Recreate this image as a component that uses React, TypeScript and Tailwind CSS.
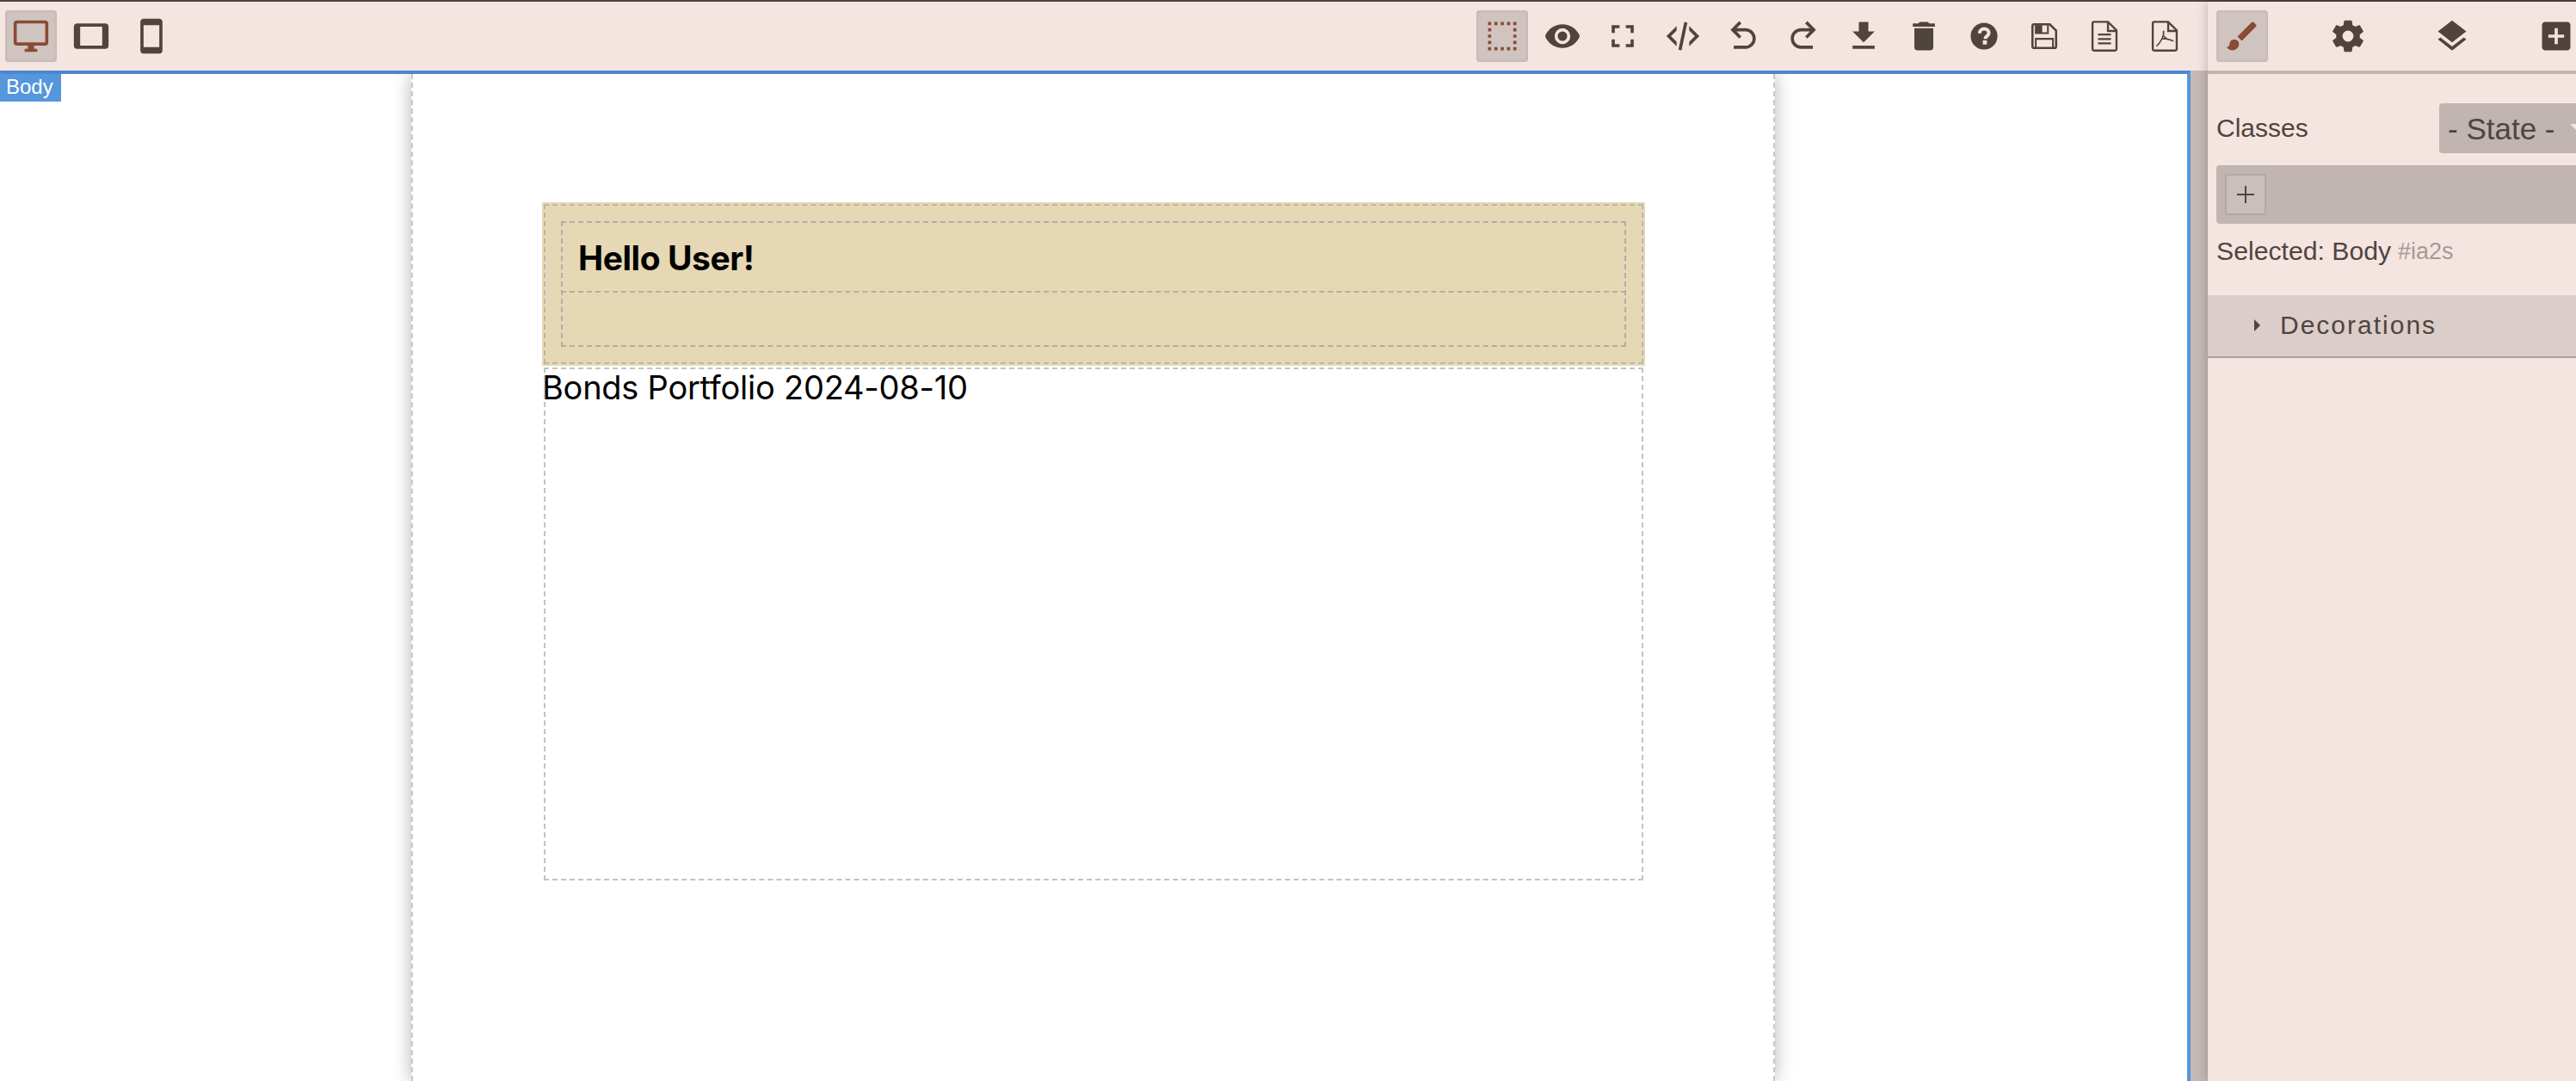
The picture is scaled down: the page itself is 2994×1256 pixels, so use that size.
import React from 'react';

const ICON = '#50443f';
const ACTIVE = '#8a4b34';

const paths = {
  desktop: 'M21,16H3V4H21M21,2H3C1.89,2 1,2.89 1,4V16A2,2 0 0,0 3,18H10V20H8V22H16V20H14V18H21A2,2 0 0,0 23,16V4C23,2.89 22.1,2 21,2Z',
  tablet: 'M19,18H5V6H19M21,4H3C1.89,4 1,4.89 1,6V18A2,2 0 0,0 3,20H21A2,2 0 0,0 23,18V6C23,4.89 22.1,4 21,4Z',
  mobile: 'M17,19H7V5H17M17,1H7C5.89,1 5,1.89 5,3V21A2,2 0 0,0 7,23H17A2,2 0 0,0 19,21V3C19,1.89 18.1,1 17,1Z',
  outline: 'M15,5H17V3H15M15,21H17V19H15M11,5H13V3H11M19,5H21V3H19M19,9H21V7H19M19,21H21V19H19M19,13H21V11H19M19,17H21V15H19M3,5H5V3H3M3,9H5V7H3M3,13H5V11H3M3,17H5V15H3M3,21H5V19H3M11,21H13V19H11M7,21H9V19H7M7,5H9V3H7V5Z',
  eye: 'M12,9A3,3 0 0,0 9,12A3,3 0 0,0 12,15A3,3 0 0,0 15,12A3,3 0 0,0 12,9M12,17A5,5 0 0,1 7,12A5,5 0 0,1 12,7A5,5 0 0,1 17,12A5,5 0 0,1 12,17M12,4.5C7,4.5 2.73,7.61 1,12C2.73,16.39 7,19.5 12,19.5C17,19.5 21.27,16.39 23,12C21.27,7.61 17,4.5 12,4.5Z',
  fullscreen: 'M5,5H10V7H7V10H5V5M14,5H19V10H17V7H14V5M17,14H19V19H14V17H17V14M10,17V19H5V14H7V17H10Z',
  code: 'M12.89,3L14.85,3.4L11.11,21L9.15,20.6L12.89,3M19.59,12L16,8.41V5.58L22.42,12L16,18.41V15.58L19.59,12M1.58,12L8,5.58V8.41L4.41,12L8,15.58V18.41L1.58,12Z',
  undo: 'M20 13.5C20 17.09 17.09 20 13.5 20H6V18H13.5C16 18 18 16 18 13.5S16 9 13.5 9H7.83L10.91 12.09L9.5 13.5L4 8L9.5 2.5L10.92 3.91L7.83 7H13.5C17.09 7 20 9.91 20 13.5Z',
  redo: 'M10.5 18H18V20H10.5C6.91 20 4 17.09 4 13.5S6.91 7 10.5 7H16.17L13.08 3.91L14.5 2.5L20 8L14.5 13.5L13.09 12.09L16.17 9H10.5C8 9 6 11 6 13.5S8 18 10.5 18Z',
  download: 'M5,20H19V18H5M19,9H15V3H9V9H5L12,16L19,9Z',
  trash: 'M19,4H15.5L14.5,3H9.5L8.5,4H5V6H19M6,19A2,2 0 0,0 8,21H16A2,2 0 0,0 18,19V7H6V19Z',
  brush: 'M20.71,4.63L19.37,3.29C19,2.9 18.35,2.9 17.96,3.29L9,12.25L11.75,15L20.71,6.04C21.1,5.65 21.1,5 20.71,4.63M7,14A3,3 0 0,0 4,17C4,18.31 2.84,19 2,19C2.92,20.22 4.5,21 6,21A4,4 0 0,0 10,17A3,3 0 0,0 7,14Z',
  cog: 'M12,15.5A3.5,3.5 0 0,1 8.5,12A3.5,3.5 0 0,1 12,8.5A3.5,3.5 0 0,1 15.5,12A3.5,3.5 0 0,1 12,15.5M19.43,12.97C19.47,12.65 19.5,12.33 19.5,12C19.5,11.67 19.47,11.34 19.43,11L21.54,9.37C21.73,9.22 21.78,8.95 21.66,8.73L19.66,5.27C19.54,5.05 19.27,4.96 19.05,5.05L16.56,6.05C16.04,5.66 15.5,5.32 14.87,5.07L14.5,2.42C14.46,2.18 14.25,2 14,2H10C9.75,2 9.54,2.18 9.5,2.42L9.13,5.07C8.5,5.32 7.96,5.66 7.44,6.05L4.95,5.05C4.73,4.96 4.46,5.05 4.34,5.27L2.34,8.73C2.21,8.95 2.27,9.22 2.46,9.37L4.57,11C4.53,11.34 4.5,11.67 4.5,12C4.5,12.33 4.53,12.65 4.57,12.97L2.46,14.63C2.27,14.78 2.21,15.05 2.34,15.27L4.34,18.73C4.46,18.95 4.73,19.03 4.95,18.95L7.44,17.94C7.96,18.34 8.5,18.68 9.13,18.93L9.5,21.58C9.54,21.82 9.75,22 10,22H14C14.25,22 14.46,21.82 14.5,21.58L14.87,18.93C15.5,18.67 16.04,18.34 16.56,17.94L19.05,18.95C19.27,19.03 19.54,18.95 19.66,18.73L21.66,15.27C21.78,15.05 21.73,14.78 21.54,14.63L19.43,12.97Z',
  layers: 'M12,16L19.36,10.27L21,9L12,2L3,9L4.63,10.27M12,18.54L4.62,12.81L3,14.07L12,21.07L21,14.07L19.37,12.8L12,18.54Z',
  plusBox: 'M17,13H13V17H11V13H7V11H11V7H13V11H17M19,3H5C3.89,3 3,3.89 3,5V19C3,20.1 3.89,21 5,21H19C20.1,21 21,20.1 21,19V5C21,3.89 20.1,3 19,3Z',
};

type IconName = keyof typeof paths | 'help' | 'save' | 'file' | 'pdf';

const pageOutline = 'M6.2 2.9H14.2L19.6 8.3V20.1C19.6 20.7 19.2 21.1 18.6 21.1H5.4C4.8 21.1 4.4 20.7 4.4 20.1V3.9C4.4 3.3 4.8 2.9 5.4 2.9Z M14.2 3V8.7H19.6';

// these four are drawn by hand, the rest are filled paths
const customIcons: Partial<Record<IconName, React.ReactNode>> = {
  help: (
    <>
      <circle cx="12" cy="12" r="8.5" />
      <path
        d="M9.2 10.2C9.2 8.5 10.5 7.4 12.1 7.4C13.8 7.4 15 8.5 15 10C15 11.2 14.2 11.8 13.5 12.3C12.9 12.7 12.8 13 12.8 13.8"
        fill="none"
        stroke="#f4e5e1"
        strokeWidth="2.2"
      />
      <rect x="11.2" y="14.7" width="2.6" height="2.6" fill="#f4e5e1" />
    </>
  ),
  save: (
    <>
      <path
        d="M5.5 4.5H15.5L19.5 8.5V18.5C19.5 19.1 19.1 19.5 18.5 19.5H5.5C4.9 19.5 4.5 19.1 4.5 18.5V5.5C4.5 4.9 4.9 4.5 5.5 4.5Z"
        fill="none"
        stroke="currentColor"
        strokeWidth="1.4"
      />
      <path d="M6.6 5V10.1H14.3V5M6.6 19.5V13.7H17.5V19.5" fill="none" stroke="currentColor" strokeWidth="1.1" />
      <rect x="7.1" y="5" width="3.6" height="5" />
    </>
  ),
  file: (
    <>
      <path d={pageOutline} fill="none" stroke="currentColor" strokeWidth="1.3" />
      <path d="M7.9 11H16.1M7.9 13.8H16.1M7.9 16.6H16.1" fill="none" stroke="currentColor" strokeWidth="1.2" />
    </>
  ),
  pdf: (
    <>
      <path d={pageOutline} fill="none" stroke="currentColor" strokeWidth="1.3" />
      <path
        d="M11.2 8.6C11.8 11.5 9.8 15.5 6.8 18.4M10 13.8C12 13.2 14.8 14 17.5 15.2M11.5 11.8C11.8 12.8 12.5 13.2 13.4 13.7"
        fill="none"
        stroke="currentColor"
        strokeWidth="0.9"
      />
    </>
  ),
};

const ToolButton = ({ name, active }: { name: IconName; active?: boolean }) => (
  <div
    className={`flex h-[60px] w-[60px] shrink-0 items-center justify-center rounded-[4px] ${
      active ? 'bg-[#d0c4c0] shadow-[inset_0_0_4px_rgba(0,0,0,0.12)]' : ''
    }`}
  >
    <svg viewBox="0 0 24 24" className="h-11 w-11" fill={active ? ACTIVE : ICON} color={active ? ACTIVE : ICON}>
      {customIcons[name] ?? <path d={paths[name as keyof typeof paths]} />}
    </svg>
  </div>
);

const rightTools: IconName[] = ['eye', 'fullscreen', 'code', 'undo', 'redo', 'download', 'trash', 'help', 'save', 'file', 'pdf'];

const blockOutline = 'outline-2 outline-dashed outline-offset-[-4px] outline-[rgba(170,170,170,0.7)]';

export default function App() {
  return (
    <div className="flex h-[1256px] w-[2994px] flex-col overflow-hidden bg-white font-['Liberation_Sans',sans-serif] text-[#50443f]">
      <div className="h-[2px] shrink-0 bg-[#4a4543]" />
      <div className="flex min-h-0 flex-1">
        <div className="flex w-[2566px] shrink-0 flex-col">
          {/* top toolbar */}
          <div className="flex h-[80px] shrink-0 items-center justify-between bg-[#f4e5e1] pl-[6px] pr-[20px]">
            <div className="flex gap-[10px]">
              <ToolButton name="desktop" active />
              <ToolButton name="tablet" />
              <ToolButton name="mobile" />
            </div>
            <div className="flex gap-[10px]">
              <ToolButton name="outline" active />
              {rightTools.map(t => (
                <ToolButton key={t} name={t} />
              ))}
            </div>
          </div>

          <div className="flex min-h-0 flex-1 bg-[#c4b9b6]">
            {/* canvas */}
            <div className="relative min-w-0 flex-1 overflow-hidden border-r-4 border-t-4 border-r-[#5596dd] border-t-[#4c88cd] bg-white">
              <div className="absolute left-0 top-0 z-10 flex h-8 w-[71px] items-center bg-[#5596dc] pb-[2px] pl-[7px] text-[24px] leading-none text-white">
                Body
              </div>
              <div className="ml-[478px] h-full w-[1585px] border-x-2 border-dashed border-[#c8c8c8] pl-[150px] pr-[149px] pt-[149px] font-['Inter',sans-serif] text-black shadow-[0_0_20px_rgba(0,0,0,0.3)]">
                <div className={`h-[190px] bg-[#e6d8b4] p-[22px] ${blockOutline}`}>
                  <div className="h-full outline-2 outline-offset-[-2px] outline-dashed outline-[rgba(170,170,170,0.9)]">
                    <div className="flex h-[83px] items-center border-b-2 border-dashed border-[#b5afa2] pl-[20px] pt-[4px] text-[39px] font-bold leading-none tracking-[-0.45px]">
                      Hello User!
                    </div>
                  </div>
                </div>
                <div className={`h-[600px] ${blockOutline} pt-[2px] text-[38px] leading-[46px] tracking-[-0.25px]`}>
                  Bonds Portfolio 2024-08-10
                </div>
              </div>
            </div>
            {/* gutter next to the panel */}
            <div className="w-5 shrink-0" />
          </div>
        </div>

        {/* right panel */}
        <div className="relative z-20 min-w-0 flex-1 overflow-hidden bg-[#f4e5e1] shadow-[0_0_12px_rgba(0,0,0,0.25)]">
          <div className="flex h-[84px] w-[500px] items-start border-b-4 border-[#c0b5b0] pl-[10px] pt-[10px]">
            <div className="w-[121px]">
              <ToolButton name="brush" active />
            </div>
            <div className="w-[121px] pl-[2px]">
              <ToolButton name="cog" />
            </div>
            <div className="w-[121px] pl-[2px]">
              <ToolButton name="layers" />
            </div>
            <div className="w-[121px] pl-[2px]">
              <ToolButton name="plusBox" />
            </div>
          </div>

          <div className="mt-[34px] flex h-[58px] w-[500px] items-center pl-[10px]">
            <span className="w-[259px] text-[30px] leading-none">Classes</span>
            <div className="flex h-[58px] flex-1 items-center rounded-[4px] bg-[#c0b5b0] pl-[10px] text-[35px] leading-none">
              - State -
              <span className="ml-[18px] h-0 w-0 border-x-[10px] border-t-[10px] border-x-transparent border-t-[#f4e5e1]" />
            </div>
          </div>

          <div className="ml-[10px] mt-[14px] flex h-[68px] w-[500px] items-center rounded-[4px] bg-[#c0b5b0] pl-[10px]">
            <div className="flex h-12 w-12 items-center justify-center rounded-[3px] border-2 border-[#b3a8a3] bg-[#c9c0bc]">
              <svg viewBox="0 0 20 20" className="h-5 w-5" stroke={ICON} strokeWidth="2">
                <path d="M10 0V20M0 10H20" />
              </svg>
            </div>
          </div>

          <div className="ml-[10px] mt-[15px] flex h-[34px] items-center text-[30.2px] leading-none">
            Selected: Body
            <span className="ml-[8px] text-[27px] text-[#a89a96]">#ia2s</span>
          </div>

          <div className="mt-[34px] flex h-[73px] items-center border-b-2 border-[#a89f9b] bg-[#dbcdc9] pb-px pl-[54px] text-[30px] leading-none tracking-[2px]">
            <span className="mr-[23px] h-0 w-0 border-y-[7px] border-l-[7px] border-y-transparent border-l-[#50443f]" />
            Decorations
          </div>
        </div>
      </div>
    </div>
  );
}
